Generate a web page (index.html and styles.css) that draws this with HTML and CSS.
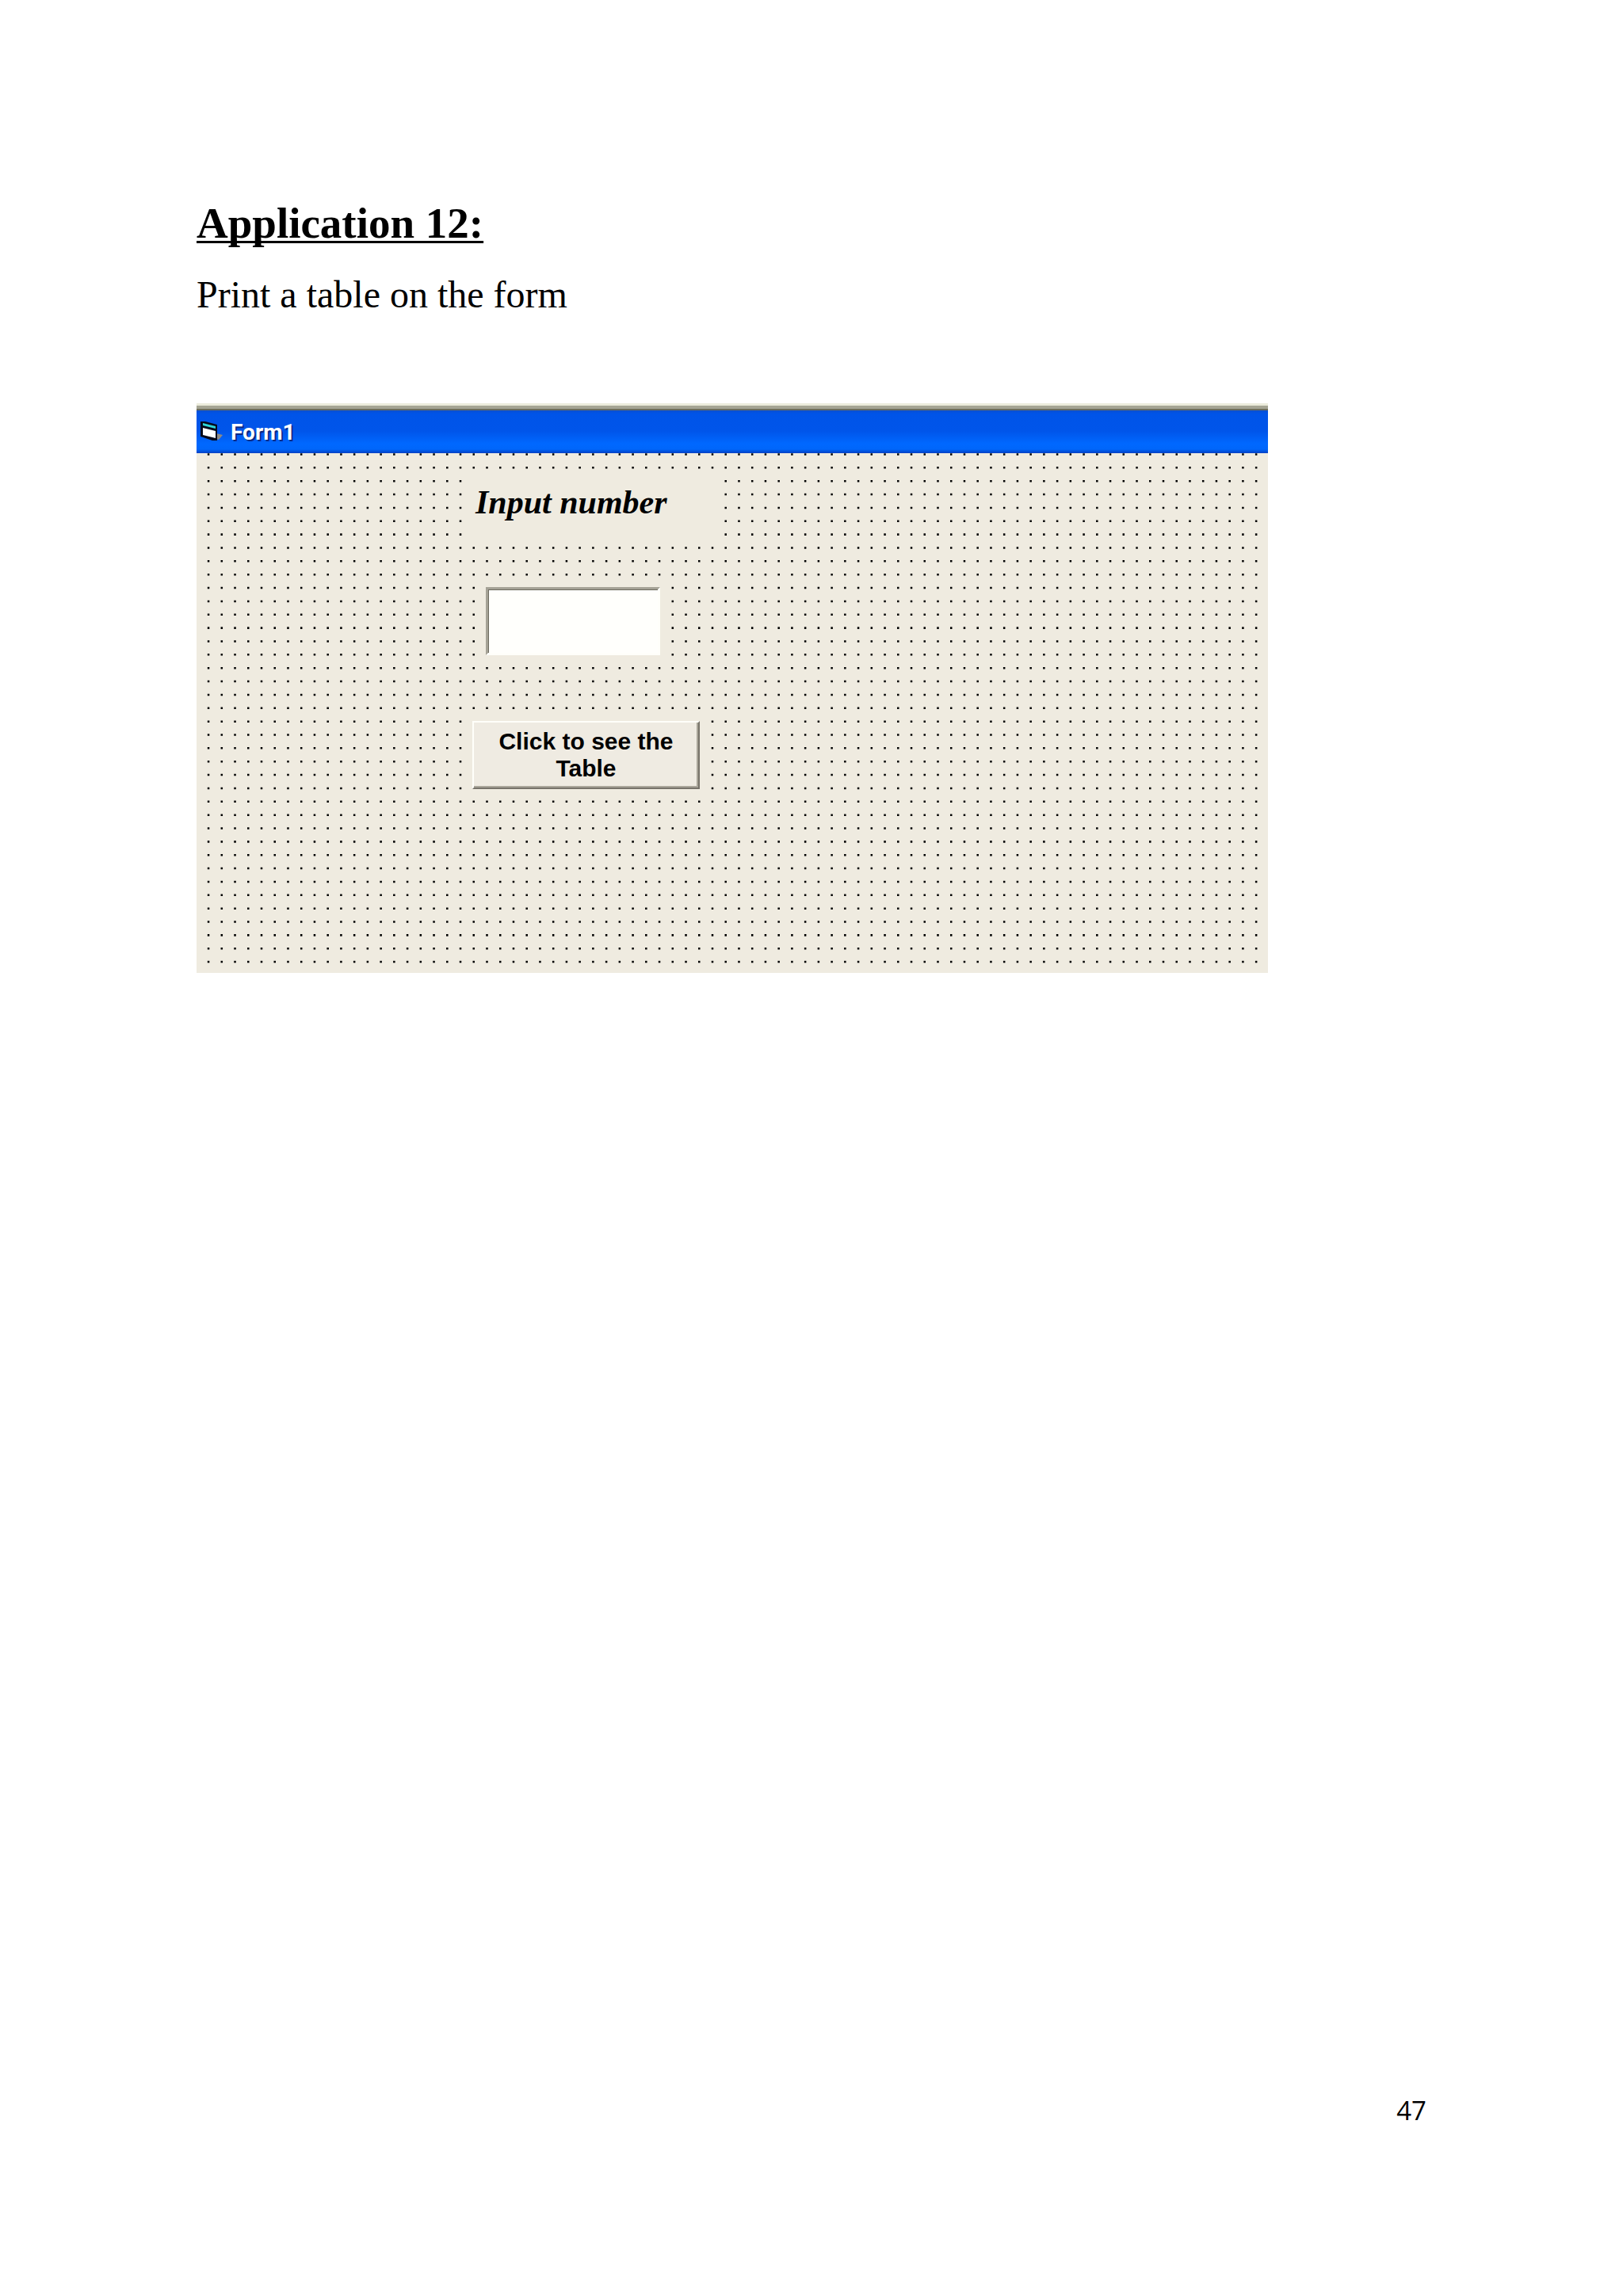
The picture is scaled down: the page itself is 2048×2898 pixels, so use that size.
FILE: index.html
```html
<!DOCTYPE html>
<html lang="en">
<head>
  <meta charset="utf-8">
  <title>Application 12</title>
  <link rel="stylesheet" href="styles.css">
</head>
<body>
  <main class="page">
    <h1>Application 12:</h1>
    <p class="intro">Print a table on the form</p>

    <section class="window">
      <header class="title-bar">
        <svg class="form-icon" viewBox="0 0 28 26" aria-hidden="true">
          <path d="M20 16l8 2-5 6-3-1z" fill="#8d8a86"/>
          <path d="M0 1h6l15 4v20h-6L0 20z" fill="#050a1c"/>
          <path d="M3 3l16 4v3L3 6z" fill="#2fd6d8"/>
          <path d="M3 9l16 4v9L3 18z" fill="#fff"/>
        </svg>
        <h2>Form1</h2>
      </header>

      <form class="surface">
        <!-- design grid: 80 x 39 dots -->
        <svg class="grid" viewBox="0 0 6463 3113" preserveAspectRatio="none" aria-hidden="true">
          <path d="M66 7H6463M66 87H6463M66 167H6463M66 247H6463M66 327H6463M66 407H6463M66 487H6463M66 567H6463M66 647H6463M66 727H6463M66 807H6463M66 887H6463M66 967H6463M66 1047H6463M66 1127H6463M66 1207H6463M66 1287H6463M66 1367H6463M66 1447H6463M66 1527H6463M66 1607H6463M66 1687H6463M66 1767H6463M66 1847H6463M66 1927H6463M66 2007H6463M66 2087H6463M66 2167H6463M66 2247H6463M66 2327H6463M66 2407H6463M66 2487H6463M66 2567H6463M66 2647H6463M66 2727H6463M66 2807H6463M66 2887H6463M66 2967H6463M66 3047H6463"/>
        </svg>
        <label for="number">Input number</label>
        <input type="text" id="number" name="number">
        <button type="button">Click to see the Table</button>
      </form>
    </section>

    <footer class="page-number">47</footer>
  </main>
</body>
</html>
```

FILE: styles.css
```css
* {
  box-sizing: border-box;
}

body {
  margin: 0;
  background-color: #fff;
  color: #000;
  font-family: "Liberation Serif", serif;
}

.page {
  display: flex;
  flex-direction: column;
  min-height: 100vh;
  padding: 248px 248px 214px;
}

h1 {
  margin: 0;
  font-size: 55px;
  line-height: 68px;
  text-decoration: underline;
  text-decoration-thickness: 3px;
  text-underline-offset: 4px;
  text-decoration-skip-ink: none;
}

.intro {
  margin: 26px 0 107px;
  font-size: 48px;
  line-height: 60px;
}

.window {
  width: 100%;
  max-width: 1352px;
  border-top: 3px solid #ebebdc;
}

.title-bar {
  display: flex;
  align-items: center;
  gap: 10px;
  height: 60px;
  padding-left: 5px;
  border-top: 4px solid #a5a594;
  background: linear-gradient(#6b6d5e 2px, #0a4fd0 2px, #0054e8 6px, #0055ea 28px, #0068ff 44px, #0066fa 51px, #0040c4 56px);
}

.form-icon {
  width: 28px;
  height: 26px;
}

.title-bar h2 {
  margin: 0;
  padding-top: 3px;
  color: #fff;
  font-family: Roboto, sans-serif;
  font-size: 28px;
  line-height: 32px;
  text-shadow: 2px 2px 0 #0a2a86;
}

.surface {
  position: relative;
  display: flex;
  flex-direction: column;
  align-items: flex-start;
  height: 656px;
  padding: 26px 0 0 346px;
  background-color: #efebe0;
}

/* lies under the controls */
.grid {
  position: absolute;
  inset: 0;
  width: 100%;
  height: 100%;
}

.grid path {
  fill: none;
  stroke: #000;
  stroke-width: 12;
  stroke-dasharray: 12 68;
}

.surface label,
.surface input,
.surface button {
  position: relative;
}

.surface label {
  width: 318px;
  height: 88px;
  padding: 12px 6px;
  background-color: #efebe0;
  font-size: 42px;
  font-style: italic;
  font-weight: bold;
  line-height: 48px;
}

.surface input {
  width: 220px;
  height: 86px;
  margin: 55px 0 83px 19px;
  padding: 4px 8px;
  border: 3px solid;
  border-color: #a5a296 #fffffa #fffffa #a5a296;
  background-color: #fffffc;
  box-shadow: inset 1px 1px 0 #6e6b60, 0 0 0 2px #efebe0;
  font-family: "Liberation Sans", sans-serif;
  font-size: 30px;
}

.surface button {
  width: 287px;
  height: 86px;
  margin-left: 2px;
  padding: 0 24px;
  border: 2px solid;
  border-color: #fffffa #77736a #77736a #fffffa;
  background-color: #efebe2;
  box-shadow: inset -2px -2px 0 #aaa69a, 0 0 0 2px #efebe0;
  color: #000;
  font-family: "Liberation Sans", sans-serif;
  font-size: 30px;
  font-weight: bold;
  line-height: 34px;
}

.page-number {
  margin-top: auto;
  font-family: "Open Sans", sans-serif;
  font-size: 33px;
  line-height: 40px;
  text-align: right;
}
```
